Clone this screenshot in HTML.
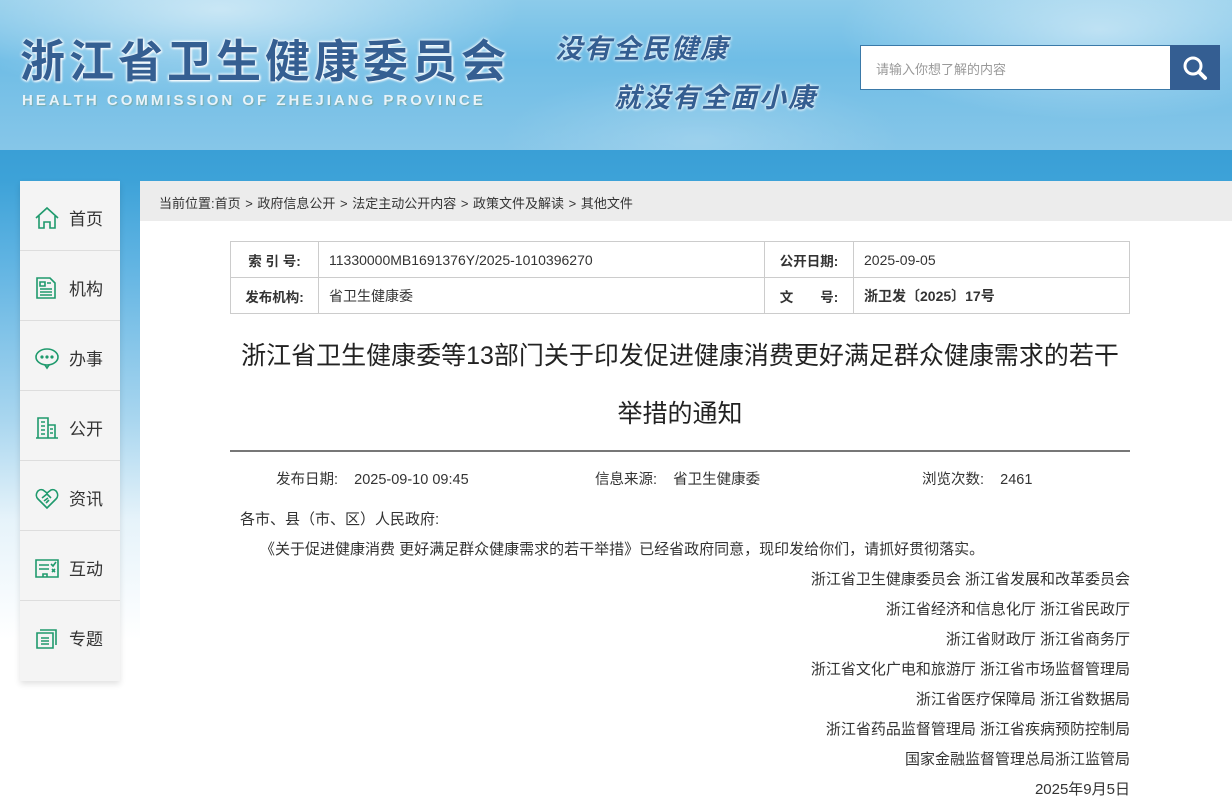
<!DOCTYPE html>
<html><head><meta charset="utf-8"><style>
*{margin:0;padding:0;box-sizing:border-box}
body{width:1232px;height:807px;overflow:hidden;position:relative;font-family:"Liberation Sans","Noto Sans CJK SC",sans-serif;color:#333;
background:linear-gradient(180deg,#8ccbea 0px,#6fbde6 60px,#86c6e8 150px,#3a9fd6 150px,#3da2d8 180px,#5fb3e2 260px,#a9d6ef 420px,#e6f3fa 520px,#fff 640px,#fff 807px);}
.hdr{position:absolute;left:0;top:0;width:1232px;height:150px;background:radial-gradient(ellipse 300px 90px at 220px 10px,rgba(255,255,255,.55),transparent),radial-gradient(ellipse 260px 90px at 1100px 30px,rgba(255,255,255,.5),transparent),radial-gradient(ellipse 200px 70px at 700px 140px,rgba(255,255,255,.2),transparent)}
.t1{position:absolute;left:20px;top:25px;font-size:45px;font-weight:bold;color:#355f92;letter-spacing:4px;text-shadow:0 0 3px #fff,0 0 3px #fff,1px 1px 2px #fff}
.t2{position:absolute;left:22px;top:92px;font-size:15px;font-weight:bold;color:#e8f3fa;letter-spacing:3px;text-shadow:1px 1px 1px #7aa}
.s1,.s2{position:absolute;font-size:27px;color:#345e91;font-style:italic;font-weight:bold;letter-spacing:2px;text-shadow:0 0 3px #fff,0 0 3px #fff}
.s1{left:555px;top:27px}.s2{left:614px;top:76px}
.search{position:absolute;left:860px;top:45px;width:360px;height:45px;border:1px solid #3a79a8;background:#fff}
.search span{position:absolute;left:15px;top:13px;font-size:13px;color:#999}
.search .btn{position:absolute;right:-1px;top:-1px;width:50px;height:45px;background:#345e92}
.side{position:absolute;left:20px;top:181px;width:100px;height:500px;background:#f4f4f4;box-shadow:0 3px 6px rgba(0,0,0,.12)}
.side div{height:70px;border-bottom:1px solid #ddd;position:relative}
.side div:last-child{border:none}
.side svg{position:absolute;left:15px;top:25px}
.side span{position:absolute;left:49px;top:24px;font-size:17px;color:#333}
.main{position:absolute;left:140px;top:181px;width:1092px;height:626px;background:#fff}
.bc{height:40px;background:#ececec;font-size:13px;padding:12px 0 0 19px;color:#333;word-spacing:1px}
table{position:absolute;left:90px;top:60px;width:900px;border-collapse:collapse;font-size:14px}
td{border:1px solid #ccc;height:36px;padding-left:10px}
td.h{font-weight:bold;text-align:center;padding:0;font-size:13.5px}
h1{position:absolute;left:90px;top:146px;width:900px;text-align:center;font-size:25px;font-weight:normal;line-height:58px;color:#222}
.hr{position:absolute;left:90px;top:269px;width:900px;height:2px;background:#777}
.meta{position:absolute;top:287px;font-size:14.5px}
p{position:absolute;font-size:15px;color:#333}
.r{right:102px;text-align:right}
</style></head><body>
<div class="hdr"></div>
<div class="t1">浙江省卫生健康委员会</div>
<div class="t2">HEALTH COMMISSION OF ZHEJIANG PROVINCE</div>
<div class="s1">没有全民健康</div>
<div class="s2">就没有全面小康</div>
<div class="search"><span>请输入你想了解的内容</span><div class="btn"><svg width="50" height="45" viewBox="0 0 50 45"><circle cx="23" cy="21" r="8" fill="none" stroke="#fff" stroke-width="3"/><path d="M29 27l6 6" stroke="#fff" stroke-width="4" stroke-linecap="round"/></svg></div></div>
<div class="side">
<div><svg width="24" height="24" viewBox="0 0 24 24" fill="none" stroke="#1f9a6d" stroke-width="1.6"><path d="M1 12L12 2l11 10M4 10v12h5v-6h6v6h5V10"/></svg><span>首页</span></div>
<div><svg width="22" height="24" viewBox="0 0 22 24" fill="none" stroke="#1f9a6d" stroke-width="1.6"><path d="M2 2h13l5 5v15H2z M5 6h5v4H5z M12 7h4 M5 13h12 M5 16h12 M5 19h12"/></svg><span>机构</span></div>
<div><svg width="24" height="24" viewBox="0 0 24 24" fill="none" stroke="#1f9a6d" stroke-width="1.6"><ellipse cx="12" cy="11" rx="11" ry="8"/><path d="M10 19l2 3 2-3"/><circle cx="7" cy="11" r=".8" fill="#1f9a6d"/><circle cx="12" cy="11" r=".8" fill="#1f9a6d"/><circle cx="17" cy="11" r=".8" fill="#1f9a6d"/></svg><span>办事</span></div>
<div><svg width="24" height="24" viewBox="0 0 24 24" fill="none" stroke="#1f9a6d" stroke-width="1.6"><path d="M3 22V2h10v20 M13 9h7v13 M1 22h22 M6 6h4 M6 10h4 M6 14h4 M6 18h4 M15 13h3 M15 17h3"/></svg><span>公开</span></div>
<div><svg width="24" height="24" viewBox="0 0 24 24" fill="none" stroke="#1f9a6d" stroke-width="1.6"><path d="M12 22L3 13C-1 9 3 2 8 4l4 3 4-3c5-2 9 5 5 9z M7 12l5-4 4 4 M9 15l4-3 M11 17l3-3"/></svg><span>资讯</span></div>
<div><svg width="24" height="24" viewBox="0 0 24 24" fill="none" stroke="#1f9a6d" stroke-width="1.6"><path d="M1 4h22v17H1z M4 9h10 M4 13h10 M16 8l2 2 3-4 M17 13l3 3 M20 13l-3 3 M8 21v-3h4v3"/></svg><span>互动</span></div>
<div><svg width="24" height="24" viewBox="0 0 24 24" fill="none" stroke="#1f9a6d" stroke-width="1.6"><path d="M2 7h16v15H2z M5 4h16v15 M6 12h8 M6 15h8 M6 18h8"/></svg><span>专题</span></div>
</div>
<div class="main">
<div class="bc">当前位置:首页 &gt; 政府信息公开 &gt; 法定主动公开内容 &gt; 政策文件及解读 &gt; 其他文件</div>
<table>
<tr><td class="h" style="width:88px">索 引 号:</td><td style="width:446px">11330000MB1691376Y/2025-1010396270</td><td class="h" style="width:89px">公开日期:</td><td>2025-09-05</td></tr>
<tr><td class="h">发布机构:</td><td>省卫生健康委</td><td class="h">文　　号:</td><td style="font-weight:bold">浙卫发〔2025〕17号</td></tr>
</table>
<h1>浙江省卫生健康委等13部门关于印发促进健康消费更好满足群众健康需求的若干<br>举措的通知</h1>
<div class="hr"></div>
<div class="meta" style="left:136px">发布日期:&nbsp;&nbsp;&nbsp;&nbsp;2025-09-10 09:45</div>
<div class="meta" style="left:455px">信息来源:&nbsp;&nbsp;&nbsp;&nbsp;省卫生健康委</div>
<div class="meta" style="left:782px">浏览次数:&nbsp;&nbsp;&nbsp;&nbsp;2461</div>
<p style="left:100px;top:327px">各市、县（市、区）人民政府:</p>
<p style="left:120px;top:357px">《关于促进健康消费 更好满足群众健康需求的若干举措》已经省政府同意，现印发给你们，请抓好贯彻落实。</p>
<p class="r" style="top:387px">浙江省卫生健康委员会 浙江省发展和改革委员会</p>
<p class="r" style="top:417px">浙江省经济和信息化厅 浙江省民政厅</p>
<p class="r" style="top:447px">浙江省财政厅 浙江省商务厅</p>
<p class="r" style="top:477px">浙江省文化广电和旅游厅 浙江省市场监督管理局</p>
<p class="r" style="top:507px">浙江省医疗保障局 浙江省数据局</p>
<p class="r" style="top:537px">浙江省药品监督管理局 浙江省疾病预防控制局</p>
<p class="r" style="top:567px">国家金融监督管理总局浙江监管局</p>
<p class="r" style="top:597px">2025年9月5日</p>
</div>
</body></html>
